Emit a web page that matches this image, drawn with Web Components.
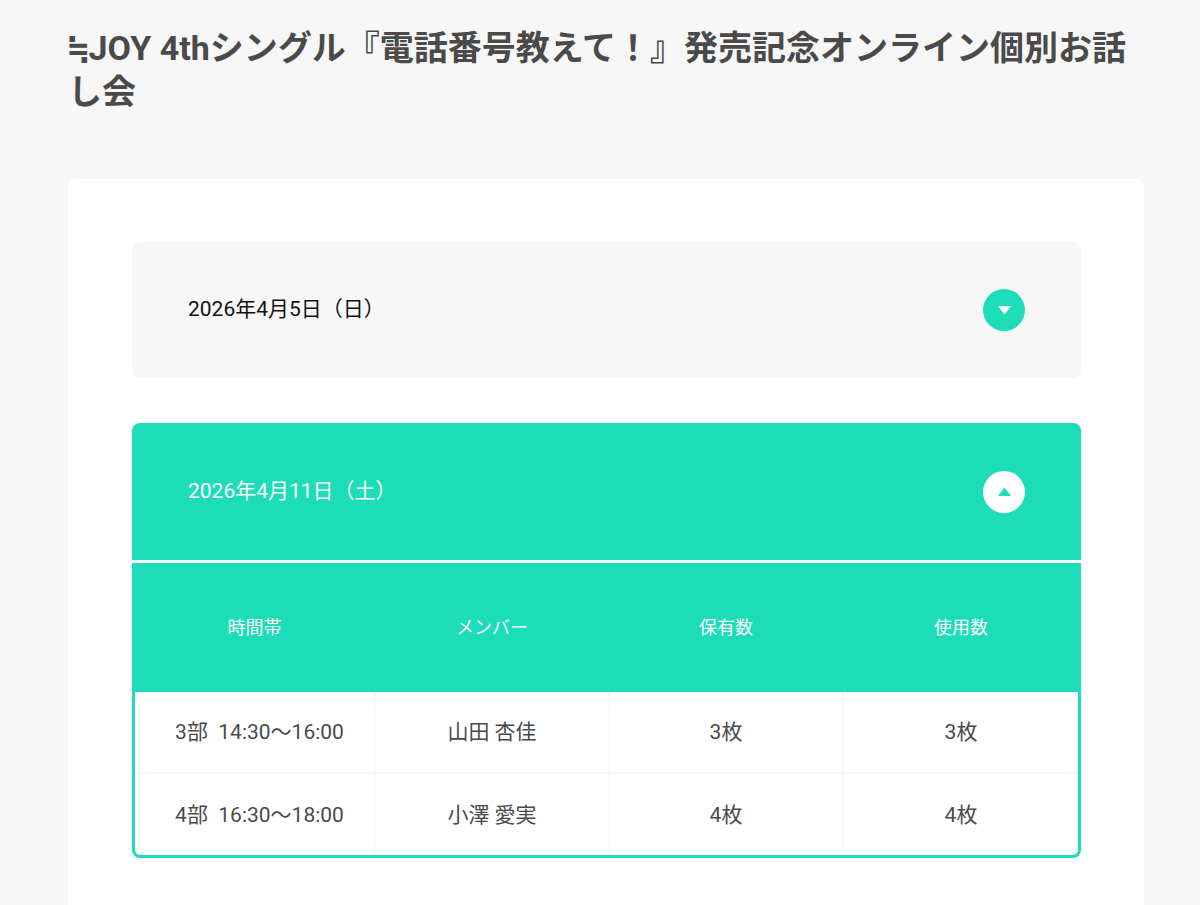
<!DOCTYPE html>
<html lang="ja">
<head>
<meta charset="utf-8">
<meta name="viewport" content="width=device-width, initial-scale=1">
<title>≒JOY 4thシングル『電話番号教えて！』発売記念オンライン個別お話し会</title>
<style>
  body {
    margin: 0;
    min-height: 100vh;
    display: flex;
    background: #f7f7f7;
    color: #4a4a4a;
    font-family: Roboto, "Noto Sans CJK JP", sans-serif;
  }
</style>
</head>
<body>
<event-page>
  <span slot="title">≒JOY 4thシングル『電話番号教えて！』発売記念オンライン個別お話し会</span>
  <date-panel>2026年4月5日（日）</date-panel>
  <date-panel open>2026年4月11日（土）
    <ticket-table slot="content"></ticket-table>
  </date-panel>
</event-page>

<template id="event-page">
  <style>
    :host {
      flex: 1;
      display: flex;
      flex-direction: column;
      gap: 65px;
      padding: 26px 56px 0 68px;
      box-sizing: border-box;
      min-width: 0;
    }
    /* The monospaced face supplies a compact ≒ sign. */
    h1 {
      margin: 0;
      font-family: Roboto, "DejaVu Sans Mono", "Noto Sans CJK JP", sans-serif;
      font-size: 34px;
      line-height: 44px;
      font-weight: 700;
    }
    main {
      flex: 1;
      display: flex;
      flex-direction: column;
      gap: 45px;
      padding: 63px 63px 48px 64px;
      background: #fff;
      border-radius: 8px 8px 0 0;
    }
  </style>
  <h1><slot name="title"></slot></h1>
  <main><slot></slot></main>
</template>

<template id="date-panel">
  <style>
    :host { display: block; }
    section { display: flex; flex-direction: column; gap: 3px; }
    h2 { margin: 0; font: inherit; }
    button {
      width: 100%;
      display: flex;
      align-items: center;
      justify-content: space-between;
      min-height: 136px;
      padding: 0 56px;
      border: 0;
      border-radius: 8px;
      background: #f7f7f7;
      color: #111;
      font: inherit;
      font-size: 21px;
      line-height: 32px;
      text-align: left;
      cursor: pointer;
    }
    button span { padding-bottom: 2px; }
    svg { display: block; width: 42px; height: 42px; }
    circle { fill: #1ddcb8; }
    path { fill: #fff; }
    .content { display: none; }
    :host([open]) button { min-height: 137px; background: #1ddcb8; color: #fff; border-radius: 8px 8px 0 0; }
    :host([open]) circle { fill: #fff; }
    :host([open]) path { fill: #1ddcb8; }
    :host([open]) svg { transform: scaleY(-1); }
    :host([open]) .content { display: block; }
  </style>
  <section>
    <h2>
      <button type="button">
        <span><slot></slot></span>
        <svg viewBox="0 0 42 42" aria-hidden="true">
          <circle cx="21" cy="21" r="21"/>
          <path d="M15 17h13l-6.500 8.500z"/>
        </svg>
      </button>
    </h2>
    <div class="content"><slot name="content"></slot></div>
  </section>
</template>

<template id="ticket-table">
  <style>
    :host {
      display: block;
      overflow: hidden;
      border: 3px solid #1ddcb8;
      border-top: 0;
      border-radius: 0 0 8px 8px;
    }
    table { width: 100%; border-collapse: separate; border-spacing: 0; table-layout: fixed; }
    col:first-child { width: 241px; }
    th {
      height: 129px;
      padding: 0 2px 0 0;
      background: #1ddcb8;
      color: #fff;
      font-size: 18px;
      line-height: 24px;
      font-weight: 400;
    }
    td {
      height: 82px;
      padding: 0;
      border-right: 2px solid #f7f7f7;
      box-sizing: border-box;
      font-size: 21px;
      line-height: 32px;
      text-align: center;
      white-space: pre;
    }
    td:first-child { padding-left: 10px; }
    tr:not(:last-child) td { border-bottom: 2px solid #f7f7f7; }
    tr:last-child td { height: 81px; }
    th:last-child { padding-right: 0; }
    td:last-child { border-right: 0; }
  </style>
  <table>
    <colgroup><col><col><col><col></colgroup>
    <thead>
      <tr><th scope="col">時間帯</th><th scope="col">メンバー</th><th scope="col">保有数</th><th scope="col">使用数</th></tr>
    </thead>
    <tbody>
      <tr><td>3部  14:30〜16:00</td><td>山田 杏佳</td><td>3枚</td><td>3枚</td></tr>
      <tr><td>4部  16:30〜18:00</td><td>小澤 愛実</td><td>4枚</td><td>4枚</td></tr>
    </tbody>
  </table>
</template>

<script>
  class TemplateElement extends HTMLElement {
    constructor() {
      super();
      const template = document.getElementById(this.localName);
      this.attachShadow({ mode: "open" }).append(template.content.cloneNode(true));
    }
  }

  class EventPage extends TemplateElement {}
  class TicketTable extends TemplateElement {}

  class DatePanel extends TemplateElement {
    static observedAttributes = ["open"];
    constructor() {
      super();
      this.button = this.shadowRoot.querySelector("button");
      this.button.setAttribute("aria-expanded", "false");
      this.button.addEventListener("click", () => this.toggleAttribute("open"));
    }
    attributeChangedCallback() {
      this.button.setAttribute("aria-expanded", String(this.hasAttribute("open")));
    }
  }

  customElements.define("event-page", EventPage);
  customElements.define("date-panel", DatePanel);
  customElements.define("ticket-table", TicketTable);
</script>
</body>
</html>
